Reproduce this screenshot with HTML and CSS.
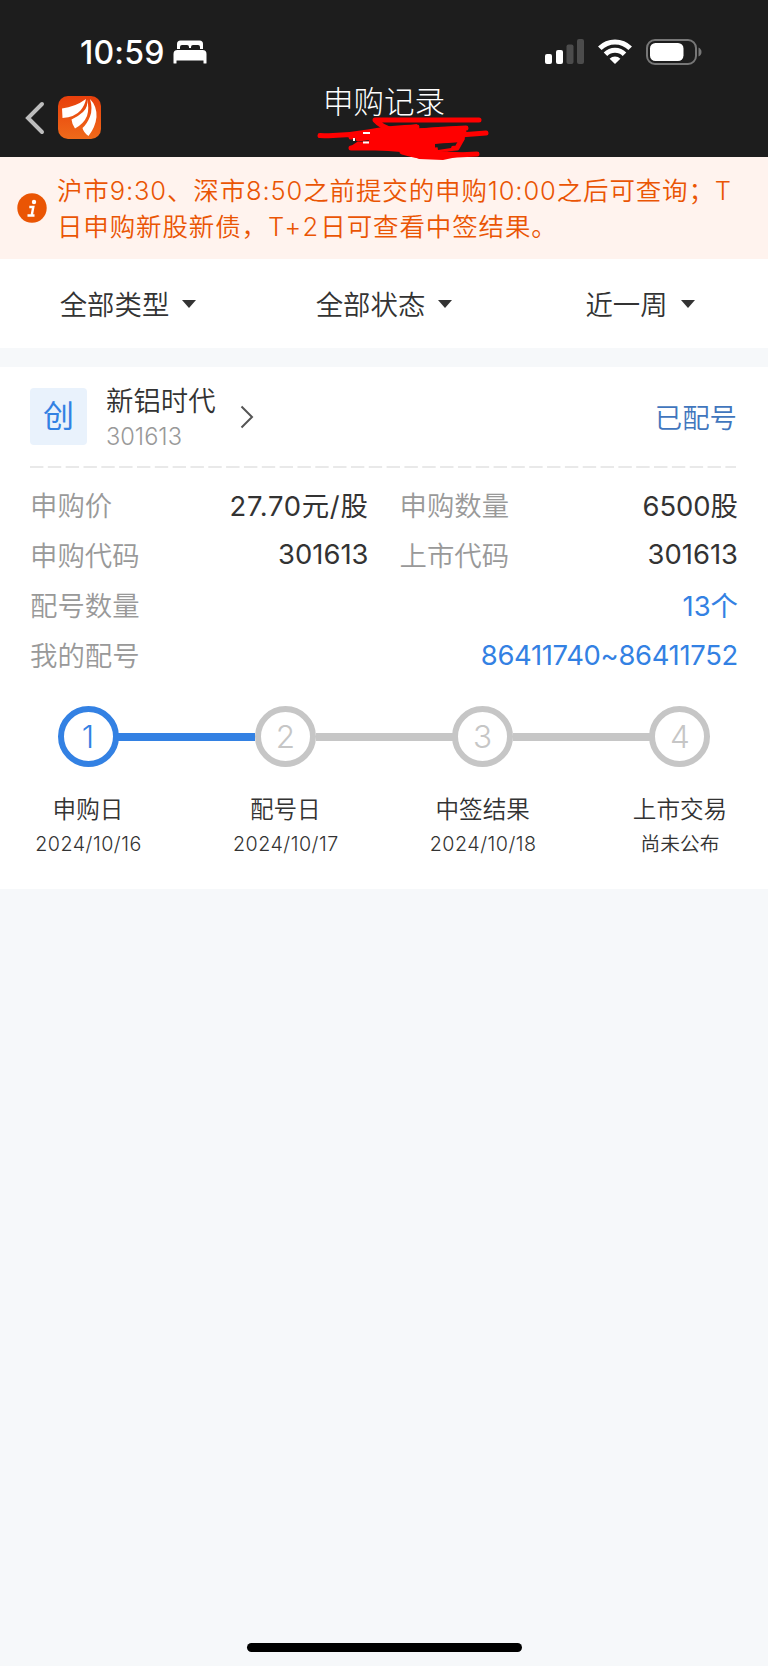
FILE: index.html
```html
<!DOCTYPE html>
<html lang="zh-CN">
  <head>
    <meta charset="UTF-8" />
    <meta name="viewport" content="width=device-width, initial-scale=1.0" />
    <title>申购记录</title>
    <link rel="stylesheet" href="styles.css" />
  </head>
  <body>
    <header class="header">
      <div class="status">
        <span class="time">10:59</span>
        <svg class="bed" width="34" height="24" viewBox="0 0 34 24">
          <path
            d="M4 9V4q0-3.500 3.500-3.500h19q3.500 0 3.500 3.500v5h-3V7q0-2-2-2h-5q-2 0-2 2v1h-2V7q0-2-2-2H9Q7 5 7 7v2z"
            fill="#fff"
          />
          <path
            d="M.500 23V14q0-4 4-4h25q4 0 4 4v9q0 .500-.5.500h-2q-.5 0-.5-.5v-2.500h-27V23q0 .500-.5.500H1q-.5 0-.5-.5z"
            fill="#fff"
          />
        </svg>
        <div class="signals">
          <svg width="40" height="26" viewBox="0 0 40 26">
            <rect x="0" y="15" width="7" height="10" rx="2" fill="#fff" />
            <rect x="11" y="11" width="7" height="14" rx="2" fill="#fff" />
            <rect x="21.500" y="5.500" width="7" height="19.500" rx="2" fill="#4c4c4c" />
            <rect x="32" y="0" width="7" height="25" rx="2" fill="#4c4c4c" />
          </svg>
          <svg class="wifi" width="34" height="26" viewBox="0 0 34 26">
            <g fill="none" stroke="#fff" stroke-width="5">
              <path d="M1.800 9.200a21.500 21.500 0 0 1 30.400 0" />
              <path d="M7.500 15.200a13.400 13.400 0 0 1 19 0" />
            </g>
            <path d="M17 25l-5.400-5.300a7.700 7.700 0 0 1 10.800 0z" fill="#fff" />
          </svg>
          <svg class="battery" width="56" height="26" viewBox="0 0 56 26">
            <rect x="1" y="1" width="49" height="24" rx="8" fill="none" stroke="#777" stroke-width="2" />
            <rect x="4" y="4" width="33.500" height="18" rx="5.500" fill="#fff" />
            <path d="M52.500 8.500q3 1.500 3 4.500t-3 4.500z" fill="#777" />
          </svg>
        </div>
      </div>
      <div class="nav">
        <svg class="back" width="20" height="34" viewBox="0 0 20 34">
          <path d="M17 3L3 17l14 14" fill="none" stroke="#bdbdbd" stroke-width="4" stroke-linecap="round" />
        </svg>
        <svg class="logo" width="43" height="43" viewBox="0 0 43 43">
          <defs>
            <linearGradient id="logo-bg" x1="0" y1="0" x2="0" y2="1">
              <stop offset="0" stop-color="#e83f0c" />
              <stop offset="1" stop-color="#ef6a1a" />
            </linearGradient>
          </defs>
          <rect width="43" height="43" rx="10" fill="url(#logo-bg)" />
          <g fill="#fff">
            <path d="M28 3Q17 11 4 12.500L4.500 22Q17 21 22.500 14.500 27 9 28 3z" />
            <path d="M29 3.500q1.500 7.500-4 12.500T13.500 23.500q.5 5 3.500 9 9-5 12-12.500 2.500-8 0-16.500z" />
            <path d="M32 3q3 10 0 17.500T24.500 32q1 4.500 6 8 7-9 8-19Q39 10 32 3z" />
          </g>
        </svg>
        <h1 class="title">申购记录</h1>
      </div>
      <svg class="scribble" width="180" height="48" viewBox="316 114 180 48">
        <g fill="none" stroke="#f00" stroke-width="5" stroke-linecap="round" stroke-linejoin="round">
          <path d="M479 120H375q6 7 20 11" />
          <path d="M320 135.500q24 1 48-3.500t49-5q-38 2-66 10" />
          <path d="M486 133q-30 3-62 2t-66 4" />
          <path d="M466 128q-50 2-92 9 50-4 88 2" />
          <path d="M462 139l-5 9-22 2M351 148h50" />
          <path d="M477 154q-30 2-60 1l-15-3q20 7 45 2" />
        </g>
        <path d="M345 134l59-5 61-3 2 8-5 8-27 2v7l22 1 14 2-28 6-24-1-18-7-26-2-24-4 6-4 12-1-2-5-12-1z" fill="#f00" />
        <path d="M437 144l16-1-2 5-13 2z" fill="#1d1d1d" />
        <path d="M354 138v3M363 142.500h6M363 133h7" fill="none" stroke="#fff" stroke-width="2" />
      </svg>
    </header>

    <section class="notice">
      <svg class="info" width="30" height="30" viewBox="0 0 30 30">
        <circle cx="15" cy="15" r="14.700" fill="#ea5504" />
        <circle cx="17" cy="9" r="2.200" fill="#fff" />
        <path d="M12.300 14h4l-1.600 8.500M10.500 22.500h7" fill="none" stroke="#fff" stroke-width="2.400" />
      </svg>
      <p>沪市9:30、深市8:50之前提交的申购10:00之后可查询；T<br />日申购新股新债，<span class="day">T+2</span>日可查看中签结果。</p>
    </section>

    <nav class="filters">
      <button>全部类型<i class="caret"></i></button>
      <button>全部状态<i class="caret"></i></button>
      <button>近一周<i class="caret"></i></button>
    </nav>

    <main class="card">
      <div class="stock">
        <span class="tag">创</span>
        <div class="names">
          <h2>新铝时代</h2>
          <span class="code">301613</span>
        </div>
        <svg class="arrow" width="14" height="24" viewBox="0 0 14 24">
          <path d="M1.500 1.500L12 12 1.500 22.500" fill="none" stroke="#555" stroke-width="2" />
        </svg>
        <span class="state">已配号</span>
      </div>
      <svg class="divider" width="706" height="2">
        <path d="M0 1h706" stroke="#e9e9e9" stroke-width="2" stroke-dasharray="13.400 4.430" />
      </svg>
      <dl class="details">
        <div><dt>申购价</dt><dd class="price">27.70元/股</dd></div>
        <div><dt>申购数量</dt><dd>6500股</dd></div>
        <div><dt>申购代码</dt><dd>301613</dd></div>
        <div><dt>上市代码</dt><dd>301613</dd></div>
        <div class="wide"><dt>配号数量</dt><dd>13个</dd></div>
        <div class="wide"><dt>我的配号</dt><dd class="range">86411740~86411752</dd></div>
      </dl>
      <ol class="steps">
        <li class="active"><span class="num">1</span><b>申购日</b><time>2024/10/16</time></li>
        <li><span class="num">2</span><b>配号日</b><time>2024/10/17</time></li>
        <li><span class="num">3</span><b>中签结果</b><time>2024/10/18</time></li>
        <li><span class="num">4</span><b>上市交易</b><span class="pending">尚未公布</span></li>
      </ol>
    </main>
    <div class="home-bar"></div>
  </body>
</html>
```
FILE: styles.css
```css
* {
  box-sizing: border-box;
  margin: 0;
  padding: 0;
}

body {
  display: flex;
  flex-direction: column;
  height: 1666px;
  background: #f6f8fa;
  color: #333;
  font-family: Inter, "Noto Sans CJK SC", sans-serif;
  font-size: 27.4px;
  font-weight: 350;
  overflow: hidden;
}

svg {
  display: block;
  flex: none;
}

.header {
  position: relative;
  height: 157px;
  background: #1d1d1d;
  color: #fff;
}

.status {
  display: flex;
  align-items: center;
  height: 88px;
  padding: 16px 66px 0 80px;
}

.time {
  width: 93px;
  font-size: 32px;
  font-weight: 500;
  letter-spacing: 0.2px;
}

.signals {
  display: flex;
  align-items: center;
  margin-left: auto;
}

.wifi {
  margin-left: 13px;
}

.battery {
  margin-left: 14px;
}

.nav {
  display: flex;
  align-items: center;
  padding: 8px 0 0 25px;
}

.logo {
  margin-left: 13px;
}

.title {
  margin: -31px 0 0 222px;
  font-size: 30.5px;
  font-weight: 300;
  line-height: 40px;
}

.scribble {
  position: absolute;
  left: 316px;
  top: 114px;
}

.notice {
  display: flex;
  align-items: center;
  height: 102px;
  padding: 0 0 0 17px;
  background: #fff3ee;
  color: #ea5504;
}

.notice p {
  margin: 2px 0 0 10px;
  font-size: 25.500px;
  line-height: 36px;
  letter-spacing: 0.87px;
  white-space: nowrap;
}

.day {
  letter-spacing: 2.2px;
}

.filters {
  display: grid;
  grid-template-columns: repeat(3, 1fr);
  height: 89px;
  padding-bottom: 2px;
  background: #fff;
}

.filters button {
  display: flex;
  align-items: center;
  justify-content: center;
  border: 0;
  background: none;
  color: #333;
  font: inherit;
}

.caret {
  margin: 2px 0 0 13px;
  border: 7px solid transparent;
  border-top: 8px solid #333;
  border-bottom: 0;
}

.card {
  height: 522px;
  margin-top: 19px;
  padding: 20px 31px 0 30px;
  background: #fff;
}

.stock {
  display: flex;
  align-items: center;
  height: 58px;
}

.tag {
  width: 57px;
  height: 57px;
  border-radius: 4px;
  background: #e9f2fc;
  color: #3381e3;
  font-size: 31px;
  font-weight: 400;
  line-height: 56px;
  text-align: center;
}

.names {
  margin: 5px 0 0 19px;
}

.names h2 {
  font-size: 27.4px;
  font-weight: 350;
  line-height: 36px;
}

.code {
  display: block;
  color: #999;
  font-size: 23.600px;
  line-height: 36px;
}

.arrow {
  margin: 2px 0 0 24px;
}

.state {
  margin-left: auto;
  color: #4176bd;
}

.divider {
  margin-top: 21px;
}

.details {
  display: grid;
  grid-template-columns: 1fr 1fr;
  column-gap: 32px;
  grid-auto-rows: 50px;
  margin-top: 11px;
}

.details div {
  display: flex;
  align-items: center;
  justify-content: space-between;
}

.details dt {
  color: #999;
}

.details dd {
  margin-right: -1px;
  font-weight: 380;
}

.details .wide {
  grid-column: 1 / 3;
}

.wide dd {
  color: #3381e3;
}

.details .price {
  letter-spacing: 0.7px;
}

.details .range {
  padding-top: 2px;
  letter-spacing: -0.3px;
}

.steps {
  display: flex;
  justify-content: space-between;
  margin: 27px -2px 0 -1px;
  list-style: none;
}

.steps li {
  position: relative;
  display: flex;
  flex-direction: column;
  align-items: center;
  width: 118px;
}

.num {
  width: 61px;
  height: 61px;
  border: 6px solid #c6c6c6;
  border-radius: 50%;
  color: #c6c6c6;
  font-size: 31.500px;
  font-weight: 300;
  line-height: 49px;
  text-align: center;
}

.steps li + li::before {
  content: "";
  position: absolute;
  top: 27px;
  right: 89px;
  width: 137px;
  height: 8px;
  background: #c6c6c6;
}

.steps .active .num {
  border-color: #3381e3;
  color: #3381e3;
}

.steps .active + li::before {
  background: #3381e3;
}

.steps b {
  margin-top: 25px;
  font-size: 23.600px;
  font-weight: 350;
  line-height: 36px;
}

.steps time,
.pending {
  font-size: 19.700px;
  line-height: 33px;
}

.steps time {
  margin-left: 1px;
  letter-spacing: 0.5px;
}

.home-bar {
  width: 275px;
  height: 9px;
  margin: auto auto 14px;
  border-radius: 5px;
  background: #000;
}
```
